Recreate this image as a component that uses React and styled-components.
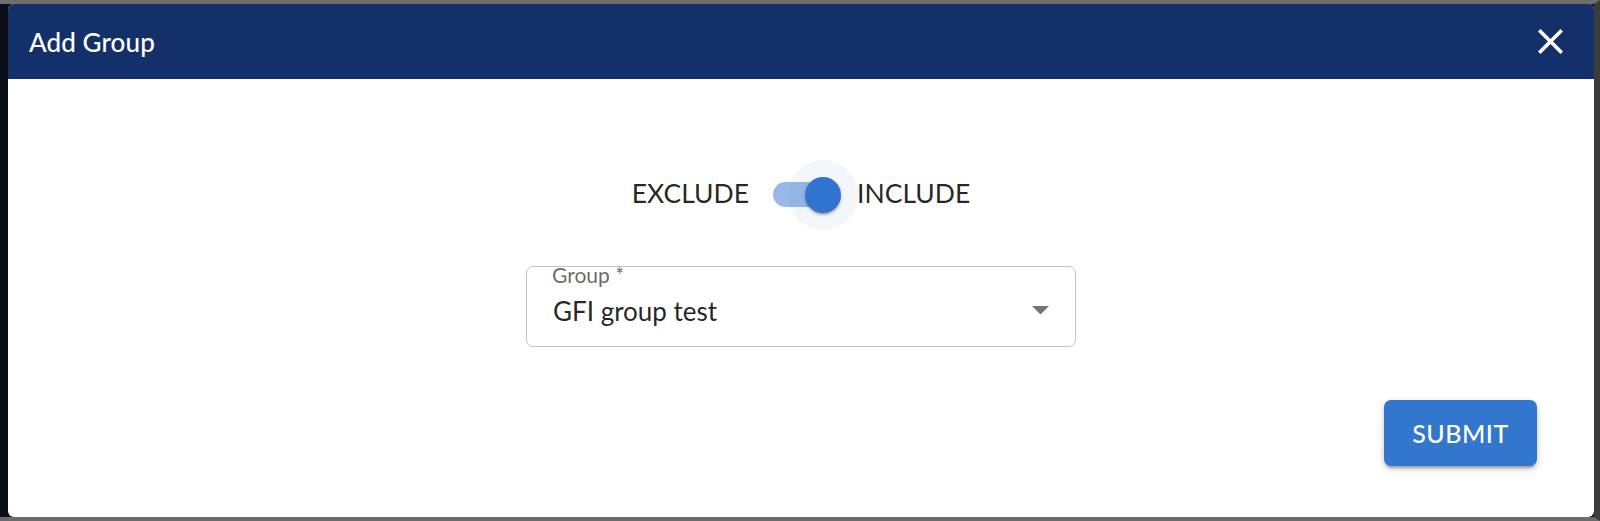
import React, { useState } from "react";
import styled, { createGlobalStyle } from "styled-components";

const GlobalStyle = createGlobalStyle`
  html, body {
    margin: 0;
    padding: 0;
    background: #0b0e18;
  }
  body {
    font-family: Lato, "Open Sans", "Liberation Sans", sans-serif;
  }
`;

const Backdrop = styled.div`
  height: 521px;
  box-sizing: border-box;
  display: flex;
  padding-left: 8px;
  border-top: 4px solid #6e6e6e;
  border-bottom: 4px solid #6b6b6b;
  border-right: 6px solid #3b3b3b;
  background: #0b0e18;
`;

const Dialog = styled.div`
  flex: 1;
  display: flex;
  flex-direction: column;
  background: #ffffff;
  border-radius: 6px;
  overflow: hidden;
`;

const Header = styled.div`
  height: 75px;
  flex-shrink: 0;
  display: flex;
  align-items: center;
  justify-content: space-between;
  padding: 0 31px 0 21px;
  background: #13306a;
`;

const Title = styled.h2`
  margin: 0;
  color: #ffffff;
  font-size: 26px;
  font-weight: 500;
  letter-spacing: 0.1px;
`;

const CloseButton = styled.button`
  width: 25px;
  height: 25px;
  padding: 0;
  border: 0;
  background: none;
  cursor: pointer;
  display: flex;
`;

const Body = styled.div`
  flex: 1;
  display: flex;
  flex-direction: column;
  padding: 81px 57px 50px;
`;

const ToggleRow = styled.div`
  align-self: center;
  display: flex;
  align-items: center;
  gap: 2px;
  height: 70px;
`;

const ToggleLabel = styled.span`
  font-size: 26.5px;
  color: rgba(0, 0, 0, 0.87);
  margin-top: -5px;
`;

const SwitchRoot = styled.span`
  position: relative;
  width: 104px;
  height: 70px;
  cursor: pointer;
`;

const Track = styled.span`
  position: absolute;
  left: 22px;
  top: 22px;
  width: 61px;
  height: 25px;
  border-radius: 13px;
  background: ${(p) => (p.$on ? "#98b9e7" : "#b5b5b5")};
`;

const Halo = styled.span`
  position: absolute;
  top: 0;
  left: ${(p) => (p.$on ? "37px" : "1px")};
  width: 70px;
  height: 70px;
  border-radius: 50%;
  background: rgba(50, 118, 205, 0.06);
`;

const Thumb = styled.span`
  position: absolute;
  top: 17px;
  left: ${(p) => (p.$on ? "54px" : "18px")};
  width: 36px;
  height: 36px;
  border-radius: 50%;
  background: ${(p) => (p.$on ? "#3174cf" : "#fafafa")};
  box-shadow: 0 3px 2px -2px rgba(0, 0, 0, 0.2), 0 2px 2px 0 rgba(0, 0, 0, 0.14),
    0 2px 5px 0 rgba(0, 0, 0, 0.12);
`;

const Field = styled.div`
  position: relative;
  align-self: center;
  margin-top: 36px;
  width: 550px;
  height: 81px;
  box-sizing: border-box;
  display: flex;
  align-items: center;
  justify-content: space-between;
  padding: 8px 26px 0 26px;
  border: 1px solid #c4c4c4;
  border-radius: 7px;
`;

const FieldLabel = styled.label`
  position: absolute;
  left: 25px;
  top: -1px;
  font-size: 21px;
  line-height: 17px;
  color: rgba(0, 0, 0, 0.6);
`;

const FieldValue = styled.span`
  font-size: 26px;
  line-height: 30px;
  color: rgba(0, 0, 0, 0.87);
`;

const Actions = styled.div`
  margin-top: 53px;
  display: flex;
  justify-content: flex-end;
`;

const SubmitButton = styled.button`
  width: 153px;
  height: 66px;
  border: 0;
  border-radius: 7px;
  background: #3276cd;
  color: #ffffff;
  font-family: inherit;
  font-size: 25px;
  font-weight: 500;
  letter-spacing: 0.5px;
  cursor: pointer;
  box-shadow: 0 5px 2px -3px rgba(0, 0, 0, 0.2), 0 3px 4px 0 rgba(0, 0, 0, 0.14),
    0 2px 9px 0 rgba(0, 0, 0, 0.12);
`;

const CloseIcon = () => (
  <svg width="25" height="25" viewBox="5 5 14 14" fill="#ffffff">
    <path d="M19 6.41 17.59 5 12 10.59 6.41 5 5 6.41 10.59 12 5 17.59 6.41 19 12 13.41 17.59 19 19 17.59 13.41 12z" />
  </svg>
);

const ArrowDown = () => (
  <svg width="17" height="9" viewBox="0 0 17 9" fill="#757575">
    <path d="M0 0h17L8.5 8.5z" />
  </svg>
);

export default function App() {
  const [include, setInclude] = useState(true);

  return (
    <>
      <GlobalStyle />
      <Backdrop>
        <Dialog>
          <Header>
            <Title>Add Group</Title>
            <CloseButton aria-label="close">
              <CloseIcon />
            </CloseButton>
          </Header>
          <Body>
            <ToggleRow>
              <ToggleLabel>EXCLUDE</ToggleLabel>
              <SwitchRoot onClick={() => setInclude(!include)}>
                <Track $on={include} />
                <Halo $on={include} />
                <Thumb $on={include} />
              </SwitchRoot>
              <ToggleLabel>INCLUDE</ToggleLabel>
            </ToggleRow>
            <Field>
              <FieldLabel>Group *</FieldLabel>
              <FieldValue>GFI group test</FieldValue>
              <ArrowDown />
            </Field>
            <Actions>
              <SubmitButton>SUBMIT</SubmitButton>
            </Actions>
          </Body>
        </Dialog>
      </Backdrop>
    </>
  );
}
